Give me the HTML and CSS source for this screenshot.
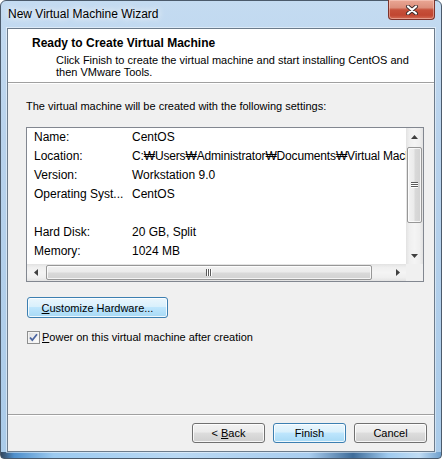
FILE: index.html
```html
<!DOCTYPE html>
<html lang="en">
<head>
  <meta charset="UTF-8" />
  <title>New Virtual Machine Wizard</title>
  <link rel="stylesheet" href="styles.css">
</head>
<body>
  <div class="window">
    <div class="titlebar">
      <span class="title">New Virtual Machine Wizard</span>
      <button class="close" title="Close">
        <svg width="14" height="10" viewBox="0 0 14 10">
          <path d="M3 1.5 L11 8.5 M11 1.5 L3 8.5" stroke="#3b2b2b" stroke-width="4" stroke-linecap="round" fill="none"/>
          <path d="M3 1.5 L11 8.5 M11 1.5 L3 8.5" stroke="#fff" stroke-width="2.2" stroke-linecap="round" fill="none"/>
        </svg>
      </button>
    </div>

    <div class="client">
      <!-- Page header -->
      <div class="header">
        <h1>Ready to Create Virtual Machine</h1>
        <p>Click Finish to create the virtual machine and start installing CentOS and then VMware Tools.</p>
      </div>

      <!-- Summary -->
      <div class="content">
        <p class="intro">The virtual machine will be created with the following settings:</p>
        <div class="listbox">
          <div class="rows">
            <div class="row"><span class="key">Name:</span><span>CentOS</span></div>
            <div class="row"><span class="key">Location:</span><span class="path">C:₩Users₩Administrator₩Documents₩Virtual Machines₩CentOS</span></div>
            <div class="row"><span class="key">Version:</span><span>Workstation 9.0</span></div>
            <div class="row"><span class="key">Operating Syst...</span><span>CentOS</span></div>
            <div class="row"></div>
            <div class="row"><span class="key">Hard Disk:</span><span>20 GB, Split</span></div>
            <div class="row"><span class="key">Memory:</span><span>1024 MB</span></div>
          </div>
          <div class="vscroll">
            <div class="arrow">
              <svg width="7" height="4" viewBox="0 0 7 4"><polygon points="3.5,0 7,4 0,4" fill="#404040"/></svg>
            </div>
            <div class="vthumb">
              <svg width="7" height="6" viewBox="0 0 7 6"><path d="M0 0.5h7M0 2.5h7M0 4.5h7" stroke="#5a5a5a"/><path d="M0 1.5h7M0 3.5h7M0 5.5h7" stroke="#fff"/></svg>
            </div>
            <div class="track"></div>
            <div class="arrow">
              <svg width="7" height="4" viewBox="0 0 7 4"><polygon points="0,0 7,0 3.5,4" fill="#404040"/></svg>
            </div>
          </div>
          <div class="hscroll">
            <div class="arrow">
              <svg width="4" height="7" viewBox="0 0 4 7"><polygon points="4,0 4,7 0,3.5" fill="#404040"/></svg>
            </div>
            <div class="hthumb">
              <svg width="6" height="7" viewBox="0 0 6 7"><path d="M0.5 0v7M2.5 0v7M4.5 0v7" stroke="#5a5a5a"/><path d="M1.5 0v7M3.5 0v7M5.5 0v7" stroke="#fff"/></svg>
            </div>
            <div class="track"></div>
            <div class="arrow">
              <svg width="4" height="7" viewBox="0 0 4 7"><polygon points="0,0 4,3.5 0,7" fill="#404040"/></svg>
            </div>
          </div>
          <div class="corner"></div>
        </div>

        <button class="btn hot customize"><u>C</u>ustomize Hardware...</button>

        <label class="check">
          <span class="box">
            <svg width="11" height="11" viewBox="0 0 11 11"><path d="M2 5.5 L4.3 8.2 L9 2.3" stroke="#4a64a0" stroke-width="1.8" fill="none"/></svg>
          </span>
          <span><u>P</u>ower on this virtual machine after creation</span>
        </label>
      </div>

      <!-- Buttons -->
      <div class="footer">
        <button class="btn">&lt; <u>B</u>ack</button>
        <button class="btn hot">Finish</button>
        <button class="btn">Cancel</button>
      </div>
    </div>
  </div>
</body>
</html>
```

FILE: styles.css
```css
* { box-sizing: border-box; }
body { margin: 0; font-family: "Liberation Sans", Arial, sans-serif; font-size: 11px; color: #000; background: #fff; }
u { text-decoration: underline; text-underline-offset: 1px; }

.window {
  width: 442px; height: 459px; padding: 0 6px 6px;
  display: flex; flex-direction: column;
  border: 1px solid #4b5a6b; border-radius: 6px 6px 4px 4px;
  background:
    linear-gradient(90deg, #33475e 0, #4f8fcb 3%, #9ccaf0 12%, #b9d8f3 40%, #a9cdef 70%, #3f6c99 80%, #9fcaef 88%, #c0dcf4 95%, #6f9fcc 100%) bottom / 100% 6px no-repeat,
    linear-gradient(#c4dbf1, #b8d2ec 30%, #aacbe9);
}

.titlebar { height: 27px; display: flex; justify-content: space-between; align-items: flex-start; }
.title { font-size: 12px; line-height: 27px; padding-left: 1px; text-shadow: 0 0 6px #fff, 0 0 10px rgba(255,255,255,0.8); }
.close {
  width: 47px; height: 20px; margin-top: -1px; padding: 0;
  display: flex; align-items: center; justify-content: center;
  border: 1px solid #7d332b; border-top: none; border-radius: 0 0 4px 4px;
  background: linear-gradient(#eaa795 0%, #dc8f7c 40%, #c6503a 52%, #c14631 80%, #d36c55 100%);
  box-shadow: inset 0 0 0 1px rgba(255,220,210,0.45);
}

.client { flex: 1; display: flex; flex-direction: column; background: #f0f0f0; border: 1px solid #6c7b8b; box-shadow: 0 0 0 1px rgba(255,255,255,0.45); }

.header { height: 54px; flex: none; background: #fff; border-bottom: 1px solid #a0a0a0; padding: 7px 0 0 24px; }
.header h1 { margin: 0; font-size: 12px; line-height: 15px; font-weight: bold; }
.header p { margin: 3px 0 0 24px; width: 362px; line-height: 12px; }

.content { flex: 1; border-top: 1px solid #fff; padding: 16px 0 0 18px; }
.intro { margin: 0; line-height: 13px; }

.listbox {
  margin-top: 14px; width: 398px; height: 155px;
  display: grid; grid-template-columns: minmax(0, 1fr) 17px; grid-template-rows: minmax(0, 1fr) 17px;
  border: 1px solid #828790; background: #fff;
}
.rows { overflow: hidden; padding-left: 7px; font-size: 12px; }
.row { display: flex; height: 19px; line-height: 19px; white-space: nowrap; }
.key { width: 98px; flex: none; }
.path { letter-spacing: -0.15px; }

.vscroll, .hscroll { display: flex; background: #eeeeee; }
.vscroll { flex-direction: column; background: linear-gradient(90deg, #e2e2e2, #efefef 20%, #f4f4f4 50%, #efefef 80%, #e2e2e2); }
.hscroll { background: linear-gradient(#e2e2e2, #efefef 20%, #f4f4f4 50%, #efefef 80%, #e2e2e2); }
.arrow { flex: none; width: 17px; height: 17px; display: flex; align-items: center; justify-content: center; }
.track { flex: 1; }
.vthumb, .hthumb {
  flex: none; display: flex; align-items: center; justify-content: center;
  border: 1px solid #979797; border-radius: 2px;
  box-shadow: inset 0 0 0 1px rgba(255,255,255,0.75);
}
.vthumb { height: 76px; margin: 2px 1px 0; background: linear-gradient(90deg, #f2f2f2, #ebebeb 45%, #d9d9d9 55%, #d2d2d2); }
.hthumb { width: 326px; margin: 1px 0 1px 2px; background: linear-gradient(#f2f2f2, #ebebeb 45%, #d9d9d9 55%, #d2d2d2); }
.corner { background: #f0f0f0; }

.btn {
  height: 20px; padding: 0; font: inherit; font-size: 11px; color: #000;
  border: 1px solid #707070; border-radius: 3px;
  background: linear-gradient(#f2f2f2, #ebebeb 45%, #dddddd 50%, #cfcfcf);
  box-shadow: inset 0 0 0 1px rgba(255,255,255,0.8);
}
.btn.hot { border-color: #3c7fb1; background: linear-gradient(#eaf6fd, #d9f0fc 45%, #bee6fd 50%, #a7d9f5); }
.customize { display: block; width: 141px; height: 21px; margin: 15px 0 0 1px; }

.check { display: flex; align-items: center; gap: 2px; margin: 13px 0 0 1px; line-height: 13px; }
.box {
  width: 13px; height: 13px; display: flex; align-items: center; justify-content: center;
  border: 1px solid #8e8f8f; background: linear-gradient(135deg, #dcdcdc, #f6f6f6 70%, #fff);
  box-shadow: inset 0 0 0 1px #f4f4f4;
}

.footer { flex: none; height: 37px; display: flex; justify-content: flex-end; gap: 8px; padding: 8px 7px 0 0; border-top: 1px solid #a0a0a0; box-shadow: inset 0 1px 0 #fff; }
.footer .btn { width: 73px; }
```
